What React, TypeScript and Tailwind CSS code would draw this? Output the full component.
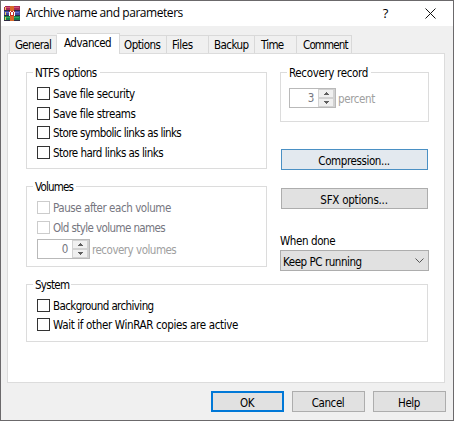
import React from 'react';

function Legend({ text, width }: { text: string; width: string }) {
  return (
    <span className={`absolute -top-[8px] left-[6px] h-[17px] bg-white pl-[2px] leading-[17px] whitespace-nowrap ${width}`}>{text}</span>
  );
}

function Check({ label, disabled = false, track = '' }: { label: string; disabled?: boolean; track?: string }) {
  return (
    <label className={`flex h-[13px] items-center gap-[3px] whitespace-nowrap ${disabled ? 'text-[#767680]' : ''}`}>
      <span className={`size-[13px] shrink-0 border bg-white ${disabled ? 'border-[#cccccc]' : 'border-[#333333]'}`} />
      <span className={`pt-[2px] leading-[13px] ${track}`}>{label}</span>
    </label>
  );
}

function Spinner({ value, width }: { value: string; width: string }) {
  return (
    <div className={`flex h-5 border border-[#b9b9b9] bg-white text-[#767680] ${width}`}>
      <span className="flex-1 pr-1 text-right leading-[19px]">{value}</span>
      <svg className="h-[18px] w-[17px]" viewBox="0 0 17 18" shapeRendering="crispEdges">
        <path d="M0 0h17v18H0z" fill="#d2d2d2" />
        <path d="M1 1h14v7H1zM1 10h14v7H1z" fill="#f0f0f0" />
        <path d="M8 3h1v1h1v1h1v1H6V5h1V4h1zM6 12h5v1h-1v1H9v1H8v-1H7v-1H6z" fill="#606060" />
      </svg>
    </div>
  );
}

function Button({ label, className }: { label: string; className: string }) {
  return (
    <button className={`flex h-[21px] items-center justify-center pr-px ${className}`}>
      <span className="pt-[3px] leading-4">{label}</span>
    </button>
  );
}

const tabs = [
  { label: 'General', box: 'w-[48px] h-[18px] pl-[5px] border-l tracking-[-0.65px]' },
  { label: 'Advanced', box: 'w-[63px] h-[21px] pl-[7px] pb-[2px] bg-white border-l-0 relative -mb-px tracking-[-0.5px]' },
  { label: 'Options', box: 'w-[47px] h-[18px] pl-[4px] tracking-[-0.5px]' },
  { label: 'Files', box: 'w-[42px] h-[18px] pl-[5px]' },
  { label: 'Backup', box: 'w-[46px] h-[18px] pl-[5px] tracking-[-0.55px]' },
  { label: 'Time', box: 'w-[42px] h-[18px] pl-[6px] tracking-[-0.7px]' },
  { label: 'Comment', box: 'w-[55px] h-[18px] pl-[6px] tracking-[-0.85px]' },
];

export default function App() {
  return (
    <div className="flex h-[421px] w-[454px] flex-col border border-[#6b696b] bg-[#f0f0f0] font-['DejaVu_Sans_Condensed','DejaVu_Sans',sans-serif] text-[11.5px] [font-stretch:condensed] tracking-[-0.4px] text-black">
      <header className="flex h-[25px] shrink-0 items-center bg-white pl-[3px] font-['Open_Sans','Noto_Sans',sans-serif] [font-stretch:normal]">
        <svg className="size-4" viewBox="0 0 16 16" shapeRendering="crispEdges">
          <path d="M1 0h15v5H0V1h1z" fill="#a52a55" />
          <path d="M1 1h14v1H1z" fill="#d65278" />
          <path d="M0 5h16v5H0z" fill="#4149a0" />
          <path d="M1 6h14v1H1z" fill="#6875c8" />
          <path d="M0 10h16v5H0z" fill="#16804a" />
          <path d="M1 11h14v1H1z" fill="#31ac61" />
          <path d="M0 4h16v1H0zM0 9h16v1H0zM0 14h16v1H0z" fill="#302b42" />
          <path d="M1 1h1v3H1zM1 6h1v3H1zM1 11h1v3H1z" fill="#efce58" />
          <path d="M6 0h4v15H6z" fill="#d86926" />
          <path d="M5 5h6v5H5z" fill="#c62e24" />
          <path d="M5 6h1v4H5zM10 6h1v4h-1zM6 5h1v1H6zM9 5h1v1H9zM7 6h2v3H7z" fill="#fff" />
        </svg>
        <h1 className="ml-[6px] pb-px text-[12px] leading-5 tracking-[-0.45px]">Archive name and parameters</h1>
        <span className="mr-[37px] ml-auto text-[13px]">?</span>
        <svg className="mr-[17px] size-[11px]" viewBox="0 0 11 11">
          <path d="M.5.5l10 10M10.5.5l-10 10" stroke="#111" strokeWidth="1" />
        </svg>
      </header>

      <nav className="mt-[7px] ml-2 flex h-5 shrink-0 items-end">
        {tabs.map((tab) => (
          <div key={tab.label} className={`flex shrink-0 items-center border-t border-r border-[#d9d9d9] ${tab.box}`}>
            <span className="pt-[2px]">{tab.label}</span>
          </div>
        ))}
      </nav>

      <main className="ml-[6px] flex h-[330px] w-[438px] shrink-0 flex-col border border-[#dcdcdc] bg-white pt-[18px] pl-[18px]">
        <div className="flex gap-[13px]">
          <div className="w-[241px]">
            <section className="relative flex h-[97px] flex-col gap-[6.67px] border border-[#dcdcdc] pt-[14px] pl-[10px]">
              <Legend text="NTFS options" width="w-[67px] tracking-[-0.5px]" />
              <Check label="Save file security" />
              <Check label="Save file streams" />
              <Check label="Store symbolic links as links" track="tracking-[-0.6px]" />
              <Check label="Store hard links as links" track="tracking-[-0.52px]" />
            </section>
            <section className="relative mt-[17px] flex h-[81px] flex-col gap-[7px] border border-[#dcdcdc] pt-[14px] pl-[10px]">
              <Legend text="Volumes" width="w-[43px] tracking-[-0.8px]" />
              <Check label="Pause after each volume" disabled track="tracking-[-0.44px]" />
              <Check label="Old style volume names" disabled track="tracking-[-0.6px]" />
              <div className="-mt-[2px] flex items-center gap-[2px] text-[#a0a0a0]">
                <Spinner value="0" width="w-[53px]" />
                <span className="pt-[2px] leading-4 tracking-[-0.5px]">recovery volumes</span>
              </div>
            </section>
          </div>
          <div className="w-[149px]">
            <section className="relative h-[50px] border border-[#dcdcdc] pt-[15px] pl-2">
              <Legend text="Recovery record" width="w-[84px] tracking-[-0.35px]" />
              <div className="flex items-center gap-[2px] text-[#a0a0a0]">
                <Spinner value="3" width="w-[47px]" />
                <span className="pt-[2px] leading-4">percent</span>
              </div>
            </section>
            <Button label="Compression..." className="mt-[27px] ml-px w-[147px] border border-[#4a90c4] bg-[#e3e9ef]" />
            <Button label="SFX options..." className="mt-[18px] ml-px w-[147px] border border-[#adadad] bg-[#e1e1e1] tracking-[-0.25px]" />
            <div className="mt-[23px] h-[18px] leading-[19px]">When done</div>
            <div className="flex h-[21px] items-center justify-between border border-[#adadad] bg-[#e1e1e1] pr-1 pl-[2px]">
              <span className="pt-[3px] leading-4 tracking-[-0.45px]">Keep PC running</span>
              <svg className="h-[5px] w-[9px]" viewBox="0 0 9 5">
                <path d="M.5.5l4 4 4-4" fill="none" stroke="#555" />
              </svg>
            </div>
          </div>
        </div>
        <section className="relative mt-[13px] flex h-[58px] w-[402px] flex-col gap-[6px] border border-[#dcdcdc] pt-[14px] pl-[10px]">
          <Legend text="System" width="w-[38px] tracking-[-0.7px]" />
          <Check label="Background archiving" track="tracking-[-0.6px]" />
          <Check label="Wait if other WinRAR copies are active" track="tracking-[-0.35px]" />
        </section>
      </main>

      <footer className="mt-2 mr-[7px] flex justify-end gap-2">
        <Button label="OK" className="w-[73px] border-2 border-[#0078d7] bg-[#e1e1e1]" />
        <Button label="Cancel" className="w-[73px] border border-[#adadad] bg-[#e1e1e1]" />
        <Button label="Help" className="w-[73px] border border-[#adadad] bg-[#e1e1e1]" />
      </footer>
    </div>
  );
}
